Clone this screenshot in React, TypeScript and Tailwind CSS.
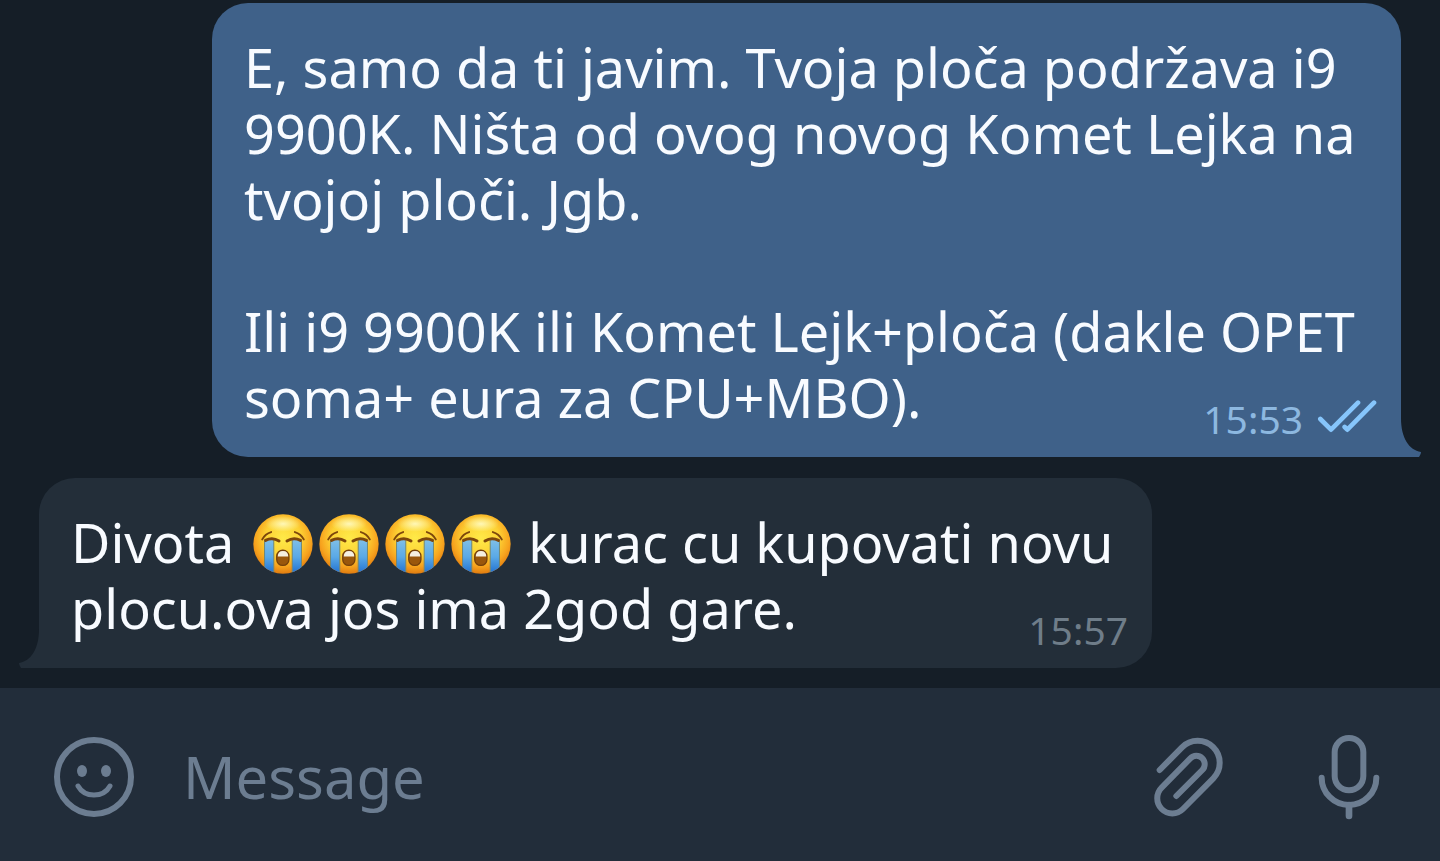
import type { ReactNode } from "react";

function SobIcon() {
  return (
    <svg
      width="60"
      height="60"
      viewBox="38 38 182 182"
      className="inline-block shrink-0"
      role="img"
      aria-label="Loudly crying face"
    >
      <defs>
        <radialGradient id="sob-face" cx="0.5" cy="0.4" r="0.6">
          <stop offset="0" stopColor="#ffea48" />
          <stop offset="0.5" stopColor="#fdd235" />
          <stop offset="0.8" stopColor="#f7a31e" />
          <stop offset="1" stopColor="#e07c10" />
        </radialGradient>
        <linearGradient id="sob-tear" x1="0" y1="0" x2="0" y2="1">
          <stop offset="0" stopColor="#7fbfe8" />
          <stop offset="0.5" stopColor="#5aa9e6" />
          <stop offset="1" stopColor="#1f6fd0" />
        </linearGradient>
        <radialGradient id="sob-shine" cx="0.5" cy="0.5" r="0.5">
          <stop offset="0" stopColor="#fffbc4" stopOpacity="0.9" />
          <stop offset="1" stopColor="#fffbc4" stopOpacity="0" />
        </radialGradient>
        <clipPath id="sob-clip">
          <circle cx="129" cy="129" r="90" />
        </clipPath>
      </defs>
      <circle cx="129" cy="129" r="90" fill="url(#sob-face)" />
      <ellipse cx="129" cy="68" rx="54" ry="24" fill="url(#sob-shine)" />
      <g clipPath="url(#sob-clip)">
        <rect x="73" y="116" width="28" height="104" fill="url(#sob-tear)" />
        <rect x="157" y="116" width="28" height="104" fill="url(#sob-tear)" />
        <path
          d="M73 118v100M101 118v100M157 118v100M185 118v100"
          stroke="#6f8878"
          strokeWidth="3"
        />
      </g>
      <g fill="none" stroke="#7d470c" strokeLinecap="round">
        <path d="M66 115Q75 98 93 93M192 115Q183 98 165 93" strokeWidth="6" />
        <path d="M76 118Q97 107 117 120M141 120Q161 107 182 118" strokeWidth="9" />
      </g>
      <rect x="110" y="148" width="37" height="46" rx="18" fill="#9a570c" stroke="#74400b" strokeWidth="4" />
      <path d="M113 167Q113 150 129 150Q145 150 145 167Z" fill="#f5efe0" />
    </svg>
  );
}

function ReadIcon() {
  return (
    <svg
      width="60"
      height="35"
      viewBox="384 60 180 105"
      fill="none"
      stroke="#86c5fb"
      strokeWidth="14"
      strokeLinecap="round"
      strokeLinejoin="round"
      role="img"
      aria-label="Read"
    >
      <path d="M394 120L426 152L507 71M467 144L475 152L555 71" />
    </svg>
  );
}

function SmileIcon() {
  return (
    <svg width="82" height="82" viewBox="0 0 82 82" fill="none" stroke="currentColor" strokeWidth="6">
      <circle cx="41" cy="41" r="37" />
      <path d="M25 50Q30 59 41 59Q52 59 57 50" strokeWidth="5" strokeLinecap="round" />
      <ellipse cx="29" cy="35" rx="5" ry="6" fill="currentColor" stroke="none" />
      <ellipse cx="53" cy="35" rx="5" ry="6" fill="currentColor" stroke="none" />
    </svg>
  );
}

function ClipIcon() {
  return (
    <svg
      width="75"
      height="84"
      viewBox="62 44 225 252"
      fill="none"
      stroke="currentColor"
      strokeWidth="18"
      strokeLinecap="round"
      strokeLinejoin="round"
    >
      <path d="M88 149L155 81A66 66 0 0 1 249 174L158 266A45 45 0 0 1 94 202L180 114A25 25 0 0 1 216 149L138 227" />
    </svg>
  );
}

function MicIcon() {
  return (
    <svg
      width="66"
      height="88"
      viewBox="558 38 198 264"
      fill="none"
      stroke="currentColor"
      strokeWidth="18"
      strokeLinecap="round"
    >
      <rect x="614" y="53" width="86" height="157" rx="43" />
      <path d="M575 172A82 82 0 0 0 739 172" />
      <path d="M657 254V287" strokeWidth="20" />
    </svg>
  );
}

function Tail({ className }: { className: string }) {
  return (
    <svg width="32" height="40" viewBox="0 0 32 40" className={className} aria-hidden="true">
      <path d="M0 0H12V1C12 21 20 33 32 35C32 37 31 38 30 40H0Z" fill="currentColor" />
    </svg>
  );
}

type BubbleProps = {
  own?: boolean;
  time: string;
  children: ReactNode;
};

function Bubble({ own = false, time, children }: BubbleProps) {
  return (
    <article
      className={
        own
          ? "relative grid w-full max-w-[1189px] self-end rounded-[36px] rounded-br-none bg-[#3f6189] pt-[31px] pr-6 pb-[18px] pl-8 text-[#3f6189]"
          : "relative grid w-full max-w-[1113px] self-start rounded-[36px] rounded-bl-none bg-[#232e39] pt-[31px] pr-6 pb-[18px] pl-8 text-[#232e39]"
      }
    >
      <Tail
        className={
          own
            ? "absolute bottom-0 -right-5"
            : "absolute bottom-0 -left-5 -scale-x-100"
        }
      />
      {/* Text and time share one cell so the time sits beside the last line */}
      <p className="relative col-start-1 row-start-1 pb-[9px] text-[54px] leading-[66px] font-[450] text-[#f8fbff]">
        {children}
      </p>
      <div
        className={
          own
            ? "relative col-start-1 row-start-1 flex items-start gap-[14px] self-end justify-self-end text-[39px] leading-[40px] text-[#8db8e0]"
            : "relative col-start-1 row-start-1 flex items-start self-end justify-self-end text-[39px] leading-[40px] text-[#6f7d89]"
        }
      >
        <time>{time}</time>
        {own && <ReadIcon />}
      </div>
    </article>
  );
}

export default function App() {
  return (
    <div className="flex min-h-screen flex-col bg-[#151e27] font-['Noto_Sans',sans-serif]">
      {/* Messages */}
      <main className="flex flex-1 flex-col justify-end gap-[21px] pr-[39px] pb-5 pl-[39px]">
        <Bubble own time="15:53">
          E, samo da ti javim. Tvoja ploča podržava i9
          <br />
          9900K. Ništa od ovog novog Komet Lejka na
          <br />
          tvojoj ploči. Jgb.
          <br />
          <br />
          Ili i9 9900K ili Komet Lejk+ploča (dakle OPET
          <br />
          soma+ eura za CPU+MBO).
        </Bubble>
        <Bubble time="15:57">
          Divota{" "}
          <span className="-mt-[14px] -mb-1 inline-flex gap-[6px] pr-[3px] pl-[5px] align-middle">
            <SobIcon />
            <SobIcon />
            <SobIcon />
            <SobIcon />
          </span>{" "}
          kurac cu kupovati novu
          <br />
          plocu.ova jos ima 2god gare.
        </Bubble>
      </main>

      {/* Composer */}
      <form className="flex items-center bg-[#222d3a] pt-[45px] pr-[58px] pb-10 pl-[53px] text-[#6c7d91]">
        <button type="button" aria-label="Emoji" className="shrink-0">
          <SmileIcon />
        </button>
        <input
          type="text"
          aria-label="Message"
          placeholder="Message"
          className="ml-12 min-w-0 flex-1 bg-transparent text-[58px] leading-[84px] text-[#f8fbff] outline-none placeholder:text-[#6c7d91]"
        />
        <button type="button" aria-label="Attach file" className="shrink-0">
          <ClipIcon />
        </button>
        <button type="button" aria-label="Record voice message" className="ml-[90px] shrink-0">
          <MicIcon />
        </button>
      </form>
    </div>
  );
}
